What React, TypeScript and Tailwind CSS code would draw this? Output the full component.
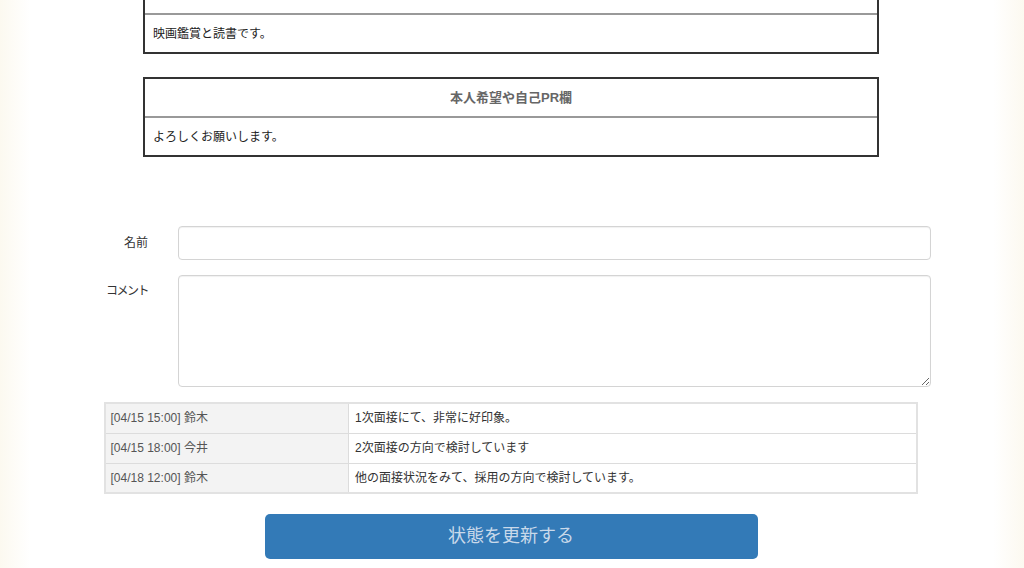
import React from "react";

const comments = [
  { head: "[04/15 15:00] 鈴木", body: "1次面接にて、非常に好印象。" },
  { head: "[04/15 18:00] 今井", body: "2次面接の方向で検討しています" },
  { head: "[04/18 12:00] 鈴木", body: "他の面接状況をみて、採用の方向で検討しています。" },
];

const ProfileBox = ({ title, body, cut }: { title?: string; body: string; cut?: boolean }) => (
  <div className={`w-[736px] border-2 border-[#333] bg-white ${cut ? "-mt-[26px]" : ""}`}>
    <div className="h-[37px] flex items-center justify-center text-[13px] font-bold text-[#666]">
      {title}
    </div>
    <div className="border-t-2 border-[#999] h-[39px] flex items-center px-[8px] text-[12px] text-[#222]">
      {body}
    </div>
  </div>
);

const App = () => {
  return (
    <div
      className="w-[1024px] h-[568px] overflow-hidden bg-[linear-gradient(to_right,#fcf9f0,#ffffff_3%,#ffffff_97%,#fcf9f0)]"
      style={{ fontFamily: '"Liberation Sans", "Noto Sans CJK JP", sans-serif' }}
    >
      <div className="flex flex-col items-center gap-[23px] mr-[2px]">
        <ProfileBox body="映画鑑賞と読書です。" cut />
        <ProfileBox title="本人希望や自己PR欄" body="よろしくお願いします。" />
      </div>

      <div className="mt-[69px] flex flex-col gap-[15px]">
        <div className="flex items-center gap-[30px]">
          <label className="w-[148px] text-right text-[12px] text-[#333]">名前</label>
          <input
            type="text"
            className="w-[753px] h-[34px] rounded-[4px] border border-[#d4d4d4] bg-white shadow-[inset_0_1px_1px_rgba(0,0,0,0.06)]"
          />
        </div>
        <div className="flex items-start gap-[30px]">
          <label className="w-[148px] text-right text-[12px] tracking-[-1.5px] text-[#333] pt-[7px]">
            コメント
          </label>
          <textarea className="w-[753px] h-[112px] rounded-[4px] border border-[#d4d4d4] bg-white shadow-[inset_0_1px_1px_rgba(0,0,0,0.06)]" />
        </div>
      </div>

      <div className="mt-[15px] flex justify-center">
        <table className="w-[814px] mr-[3px] border-collapse border-2 border-[#e2e2e2] text-[12px]">
          <tbody>
            {comments.map((c) => (
              <tr key={c.head} className="h-[30px]">
                <td className="w-[244px] border border-[#dcdcdc] bg-[#f3f3f3] px-[5px] text-[#555]">
                  {c.head}
                </td>
                <td className="border border-[#dcdcdc] bg-white px-[6px] text-[#333]">{c.body}</td>
              </tr>
            ))}
          </tbody>
        </table>
      </div>

      <div className="mt-[20px] flex justify-center">
        <button className="w-[493px] h-[45px] mr-[2px] rounded-[5px] bg-[#337ab7] text-[18px] text-[#c9d9ea]">
          状態を更新する
        </button>
      </div>
    </div>
  );
};

export default App;
